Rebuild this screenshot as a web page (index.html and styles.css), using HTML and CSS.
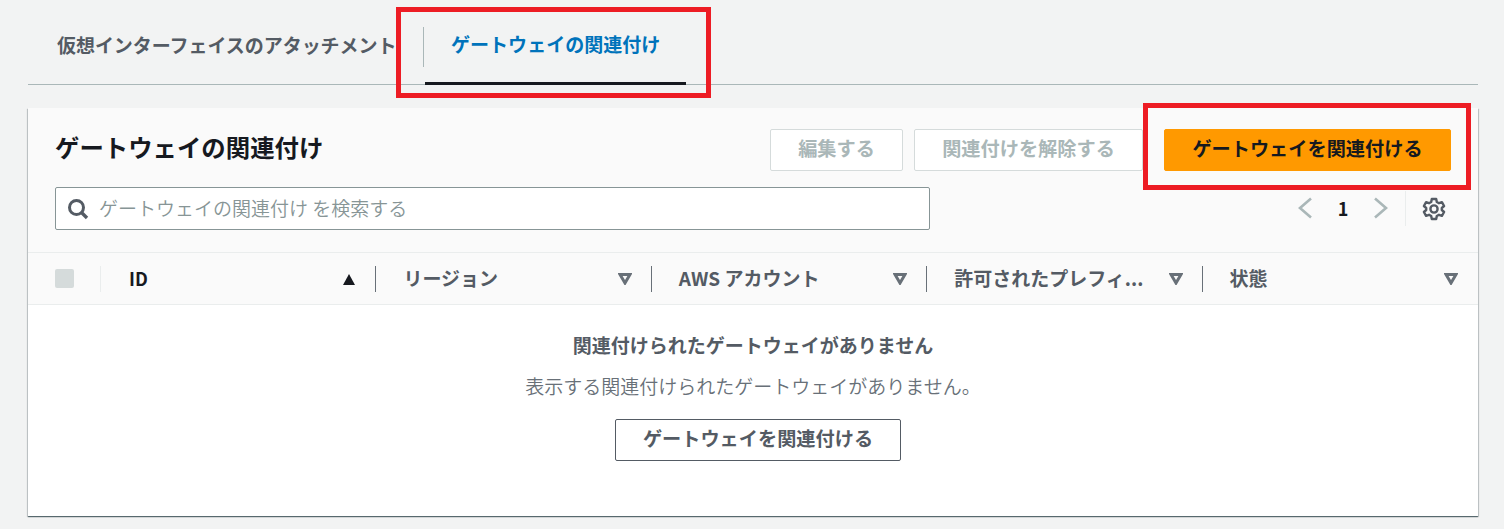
FILE: index.html
```html
<!DOCTYPE html>
<html lang="ja">
<head>
<meta charset="utf-8">
<title>ゲートウェイの関連付け</title>
<link rel="stylesheet" href="styles.css">
</head>
<body>
<main class="page">
  <nav class="tabs">
    <div class="tab">仮想インターフェイスのアタッチメント</div>
    <div class="tab tab-active"><span class="tab-label">ゲートウェイの関連付け</span></div>
  </nav>
  <section class="card">
    <header class="card-head">
      <div class="head-top">
        <h2 class="title">ゲートウェイの関連付け</h2>
        <div class="actions">
          <button class="btn btn-disabled btn-edit">編集する</button>
          <button class="btn btn-disabled btn-remove">関連付けを解除する</button>
          <button class="btn btn-primary">ゲートウェイを関連付ける</button>
        </div>
      </div>
      <div class="head-tools">
        <div class="search">
          <svg class="search-icon" viewBox="0 0 22 22" width="22" height="22"><circle cx="9.5" cy="9.5" r="7" fill="none" stroke="#545b64" stroke-width="3"/><path d="M14.5 14.5L20 20" stroke="#545b64" stroke-width="3.4" fill="none"/></svg>
          <span class="search-text">ゲートウェイの関連付け を検索する</span>
        </div>
        <div class="pager">
          <svg viewBox="0 0 16 22" width="16" height="22"><path d="M14 1.5L3 11l11 9.5" fill="none" stroke="#aab7b8" stroke-width="2.6"/></svg>
          <span class="page-num">1</span>
          <svg viewBox="0 0 16 22" width="16" height="22"><path d="M2 1.5L13 11 2 20.5" fill="none" stroke="#aab7b8" stroke-width="2.6"/></svg>
        </div>
        <div class="settings">
          <svg viewBox="0 0 24 24" width="24" height="24"><path d="M9.8 2h4.4l.6 3 2.2 1.2 2.9-1 2.2 3.8-2.3 2v2l2.3 2-2.2 3.8-2.9-1-2.2 1.2-.6 3H9.8l-.6-3L7 17.8l-2.9 1-2.2-3.8 2.3-2v-2l-2.3-2 2.2-3.8 2.9 1L9.2 5z" fill="none" stroke="#545b64" stroke-width="2.4" stroke-linejoin="round"/><circle cx="12" cy="12" r="3.6" fill="none" stroke="#545b64" stroke-width="2.4"/></svg>
        </div>
      </div>
    </header>
    <div class="thead">
      <div class="th-check"><span class="checkbox"></span></div>
      <div class="th th-first"><span class="th-label th-sorted">ID</span><svg class="sort" viewBox="0 0 14 12" width="14" height="12"><path d="M7 1l6 11H1z" fill="#16191f"/></svg></div>
      <div class="th"><span class="th-label">リージョン</span><svg class="sort" viewBox="0 0 14 12" width="14" height="12"><path d="M2 1.5h10L7 10z" fill="none" stroke="#687078" stroke-width="3"/></svg></div>
      <div class="th"><span class="th-label">AWS アカウント</span><svg class="sort" viewBox="0 0 14 12" width="14" height="12"><path d="M2 1.5h10L7 10z" fill="none" stroke="#687078" stroke-width="3"/></svg></div>
      <div class="th"><span class="th-label">許可されたプレフィ...</span><svg class="sort" viewBox="0 0 14 12" width="14" height="12"><path d="M2 1.5h10L7 10z" fill="none" stroke="#687078" stroke-width="3"/></svg></div>
      <div class="th th-last"><span class="th-label">状態</span><svg class="sort" viewBox="0 0 14 12" width="14" height="12"><path d="M2 1.5h10L7 10z" fill="none" stroke="#687078" stroke-width="3"/></svg></div>
    </div>
    <div class="empty">
      <div class="empty-title">関連付けられたゲートウェイがありません</div>
      <div class="empty-text">表示する関連付けられたゲートウェイがありません。</div>
      <button class="btn btn-normal">ゲートウェイを関連付ける</button>
    </div>
  </section>
</main>
<div class="mark mark-tab"></div>
<div class="mark mark-btn"></div>
</body>
</html>
```

FILE: styles.css
```css
* { box-sizing: border-box; }
html, body { margin: 0; padding: 0; }
body {
  width: 1504px;
  height: 529px;
  overflow: hidden;
  position: relative;
  background: #f2f3f3;
  color: #16191f;
  font-family: "Noto Sans CJK JP", "Noto Sans", sans-serif;
}
.page { padding: 0 26px 0 28px; }
.tabs {
  display: flex;
  height: 85px;
  border-bottom: 1px solid #aab7b8;
}
.tab {
  padding: 31px 26px 0 29px;
  width: 396px;
  font-size: 19px;
  line-height: 28px;
  font-weight: 700;
  color: #545b64;
  white-space: nowrap;
  letter-spacing: -0.05px;
}
.tab-active {
  position: relative;
  width: 261px;
  margin-left: 1px;
  padding: 30px 0 0 26px;
  margin-bottom: -1px;
  color: #0073bb;
  font-size: 19.05px;
  letter-spacing: 0;
  border-bottom: 3px solid #16191f;
}
.tab-active::before {
  content: "";
  position: absolute;
  left: -2px;
  top: 27px;
  width: 1px;
  height: 40px;
  background: #aab7b8;
}
.card {
  margin-top: 23px;
  height: 408px;
  background: #fff;
  box-shadow: 0 1px 1px 0 rgba(0,28,36,.5), 1px 1px 1px 0 rgba(0,28,36,.15), -1px 1px 1px 0 rgba(0,28,36,.15);
}
.card-head {
  height: 145px;
  padding: 21px 27px 0;
  background: #fafafa;
  border-bottom: 1px solid #eaeded;
}
.head-top {
  display: flex;
  justify-content: space-between;
  align-items: center;
  height: 42px;
}
.title {
  margin: 0;
  padding-bottom: 7px;
  font-size: 24.4px;
  line-height: 36px;
  font-weight: 700;
  white-space: nowrap;
}
.actions { display: flex; }
.btn {
  height: 42px;
  border-radius: 2px;
  border: 1px solid;
  font-family: inherit;
  font-size: 19.2px;
  line-height: 28px;
  font-weight: 700;
  padding: 0 0 5px;
  white-space: nowrap;
}
.btn-disabled {
  background: #fff;
  border-color: #d5dbdb;
  color: #aab7b8;
}
.btn-edit { width: 133px; margin-right: 11px; }
.btn-remove { width: 229px; margin-right: 21px; }
.btn-primary {
  width: 287px;
  background: #ff9900;
  border-color: #ff9900;
  color: #16191f;
}
.btn-normal {
  width: 286px;
  background: #fff;
  border-color: #545b64;
  color: #545b64;
}
.head-tools {
  display: flex;
  align-items: flex-start;
  margin-top: 16px;
}
.search {
  display: flex;
  align-items: center;
  width: 875px;
  height: 43px;
  background: #fff;
  border: 1px solid #879596;
  border-radius: 2px;
  padding-left: 11px;
}
.search-icon { flex: none; }
.search-text {
  margin-left: 10px;
  padding-bottom: 2px;
  font-size: 19px;
  font-weight: 350;
  color: #879596;
  white-space: nowrap;
}
.pager {
  display: flex;
  align-items: center;
  justify-content: space-between;
  width: 92px;
  height: 43px;
  margin-left: 367px;
  padding-bottom: 2px;
}
.page-num { font-size: 18px; font-weight: 700; }
.settings {
  display: flex;
  align-items: center;
  justify-content: flex-end;
  width: 46px;
  height: 35px;
  margin-left: 16px;
  margin-top: 4px;
  padding-right: 5px;
  border-left: 1px solid #eaeded;
}
.thead {
  display: grid;
  grid-template-columns: 73px repeat(5, 1fr);
  height: 52px;
  background: #fafafa;
  border-bottom: 1px solid #eaeded;
  align-items: center;
}
.th-check {
  display: flex;
  align-items: center;
  height: 26px;
  padding-left: 27px;
  border-right: 1px solid #eaeded;
}
.checkbox {
  width: 19px;
  height: 19px;
  border-radius: 2px;
  background: #d5dbdb;
}
.th {
  display: flex;
  align-items: center;
  justify-content: space-between;
  height: 26px;
  padding: 0 19px 0 27px;
  border-right: 1px solid #687078;
  font-size: 19px;
  font-weight: 700;
  color: #545b64;
  white-space: nowrap;
}
.th-first { padding-left: 28px; }
.th-last { border-right: 0; padding-right: 20px; }
.th-label { padding-bottom: 2px; }
.th-sorted { color: #16191f; font-size: 18px; }
.sort { flex: none; }
.empty {
  height: 211px;
  padding-top: 26px;
  display: flex;
  flex-direction: column;
  align-items: center;
  color: #687078;
}
.empty-title {
  font-size: 19px;
  line-height: 28px;
  font-weight: 700;
  color: #545b64;
}
.empty-text {
  margin-top: 13px;
  font-size: 19px;
  line-height: 28px;
  font-weight: 350;
  color: #687078;
}
.empty .btn-normal { margin-top: 19px; margin-left: 10px; }
.mark {
  position: absolute;
  border: 5px solid #ed1c24;
  pointer-events: none;
}
.mark-tab { left: 396px; top: 7px; width: 315px; height: 91px; }
.mark-btn { left: 1143px; top: 103px; width: 328px; height: 87px; }
```
